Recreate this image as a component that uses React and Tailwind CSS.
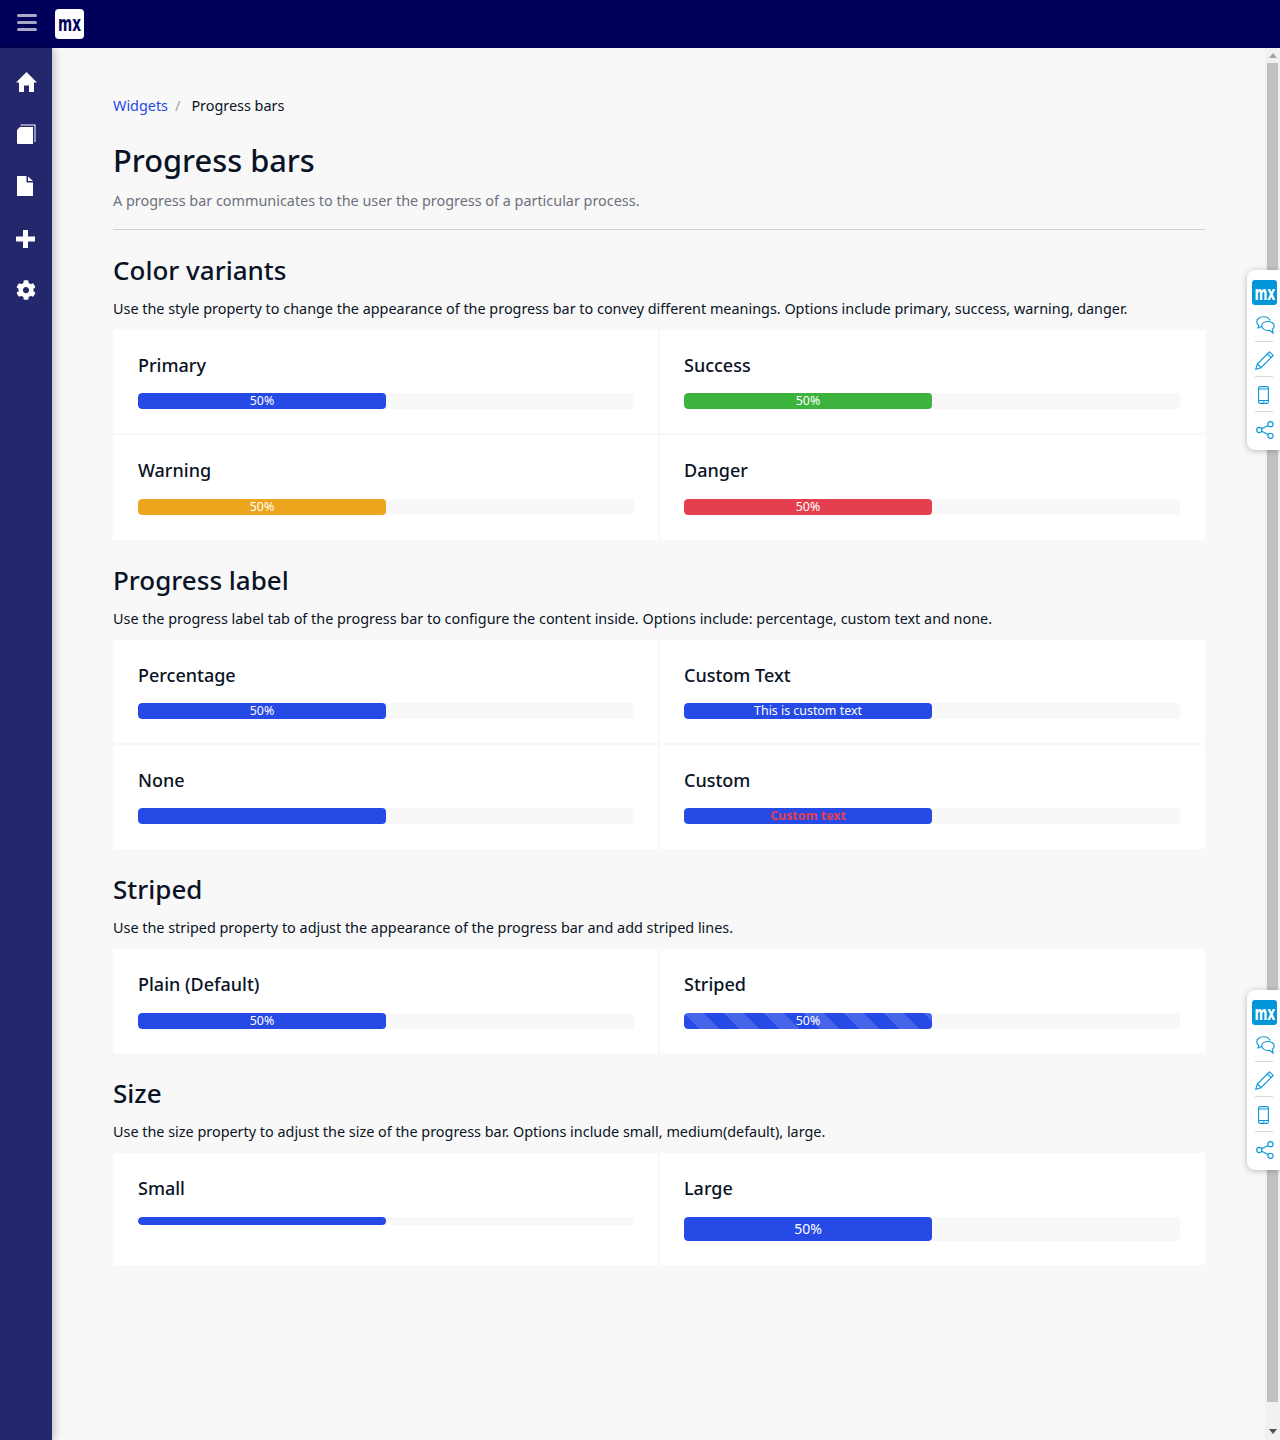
import React from "react";
import { FaCog } from "react-icons/fa";

function Bar({ color = "bg-[#264ae5]", h = "h-4", text = "50%", textCls = "text-white text-[12.4px]", striped }) {
  return (
    <div className={`${h} w-full rounded-[4px] bg-[#f8f8f8] overflow-hidden`}>
      <div
        className={`w-1/2 h-full rounded-[4px] ${color} flex items-center justify-center ${textCls} ${
          striped ? "bg-[linear-gradient(45deg,rgba(255,255,255,0.15)_25%,transparent_25%,transparent_50%,rgba(255,255,255,0.15)_50%,rgba(255,255,255,0.15)_75%,transparent_75%,transparent)] bg-[length:40px_40px]" : ""
        }`}
      >
        {text}
      </div>
    </div>
  );
}

function Cell({ title, left, right, bottom, mb = "mb-[16px]", pb = "pb-[24px]", children }) {
  return (
    <div
      className={`pt-[23px] ${pb} ${left ? "pl-[25px] pr-[24px] border-r border-[#f8f8f8]" : ""} ${
        right ? "pl-[24px] pr-[25px] border-l border-[#f8f8f8]" : ""
      } ${bottom ? "border-b-2 border-b-[#f8f8f8]" : ""}`}
    >
      <div className={`text-[18px] leading-[24px] font-medium text-[#0a1325] ${mb}`}>{title}</div>
      {children}
    </div>
  );
}

function Section({ title, desc, children }) {
  return (
    <section className="mt-[24px]">
      <h2 className="text-[26px] leading-[32px] font-medium text-[#0a1325]">{title}</h2>
      <p className="mt-[13px] text-[14.4px] leading-[20px] text-[#0a1325]">{desc}</p>
      <div className="mt-[11px] grid grid-cols-2 bg-white">{children}</div>
    </section>
  );
}

function Dock({ top }) {
  return (
    <div
      className={`absolute right-0 ${top} w-[33px] h-[180px] bg-white rounded-l-[8px] shadow-[0_1px_6px_rgba(0,0,0,0.25)] flex flex-col items-start`}
    >
      <div className="mt-[10px] ml-[5px] w-[25px] h-[25px] rounded-[3px] bg-[#0595db] text-white flex items-center justify-center overflow-hidden">
        <span className="inline-block text-[20px] leading-[24px] font-bold scale-x-[0.62]" style={{ fontFamily: '"DejaVu Sans", sans-serif' }}>mx</span>
      </div>
      <svg className="mt-[11px] ml-[9px]" width="19" height="18" viewBox="0 0 19 18" fill="none" stroke="#0595db" strokeWidth="1.1">
        <path d="M7.500.8C3.700.8.700 3 .700 5.800c0 1.400.7 2.600 1.900 3.500L2.100 12l2.800-1.400c.6.200 1.300.3 2 .3" />
        <path d="M7.500.8c3.100 0 5.700 1.500 6.400 3.700" />
        <path d="M12 5.500c3.400 0 6.200 1.900 6.200 4.400 0 1.300-.7 2.400-1.800 3.200l.6 4-3.200-2.800c-.6.100-1.200.2-1.800.2-3.400 0-6.200-2-6.200-4.600S8.600 5.500 12 5.500z" fill="white" />
      </svg>
      <div className="mt-[7px] ml-[8px] w-[18px] h-px bg-[#d8d8d8]" />
      <svg className="mt-[9px] ml-[8px]" width="19" height="19" viewBox="0 0 19 19" fill="none" stroke="#0595db" strokeWidth="1.1">
        <path d="M14.500.8l3.700 3.700L6 16.700l-5.200 1.500L2.300 13z" />
        <path d="M12.500 2.800l3.700 3.700M2.300 13L6 16.700" />
      </svg>
      <div className="mt-[6px] ml-[8px] w-[18px] h-px bg-[#d8d8d8]" />
      <svg className="mt-[9px] ml-[11px]" width="11" height="18" viewBox="0 0 11 18" fill="none" stroke="#0595db" strokeWidth="1.1">
        <rect x="0.600" y="0.600" width="9.800" height="16.800" rx="1.500" />
        <path d="M.6 3h9.800M.6 14.500h9.800M4.500 16h2" />
      </svg>
      <div className="mt-[7px] ml-[8px] w-[18px] h-px bg-[#d8d8d8]" />
      <svg className="mt-[9px] ml-[9px]" width="18" height="18" viewBox="0 0 18 18" fill="none" stroke="#0595db" strokeWidth="1.1">
        <circle cx="14.500" cy="3.200" r="2.600" />
        <circle cx="3.300" cy="9" r="2.600" />
        <circle cx="14.500" cy="14.800" r="2.600" />
        <path d="M5.600 7.800L12.200 4.400M5.600 10.200L12.200 13.600" />
      </svg>
    </div>
  );
}

export default function App() {
  return (
    <div className="relative w-[1280px] h-[1440px] overflow-hidden bg-[#f8f8f8] flex flex-col" style={{ fontFamily: '"Noto Sans", sans-serif' }}>
      <header className="h-12 shrink-0 bg-[#00005b] flex items-start">
        <div className="w-[55px] pt-[14px] pl-[17px]">
          <div className="w-5 flex flex-col gap-[4px]">
            <span className="block h-[3px] rounded-sm bg-[#a9a9c6]" />
            <span className="block h-[3px] rounded-sm bg-[#a9a9c6]" />
            <span className="block h-[3px] rounded-sm bg-[#a9a9c6]" />
          </div>
        </div>
        <div className="mt-[9px] w-[29px] h-[30px] bg-white rounded-[4px] text-[#00005b] flex items-center justify-center overflow-hidden">
          <span className="inline-block text-[22px] leading-[26px] font-bold scale-x-[0.62]" style={{ fontFamily: '"DejaVu Sans", sans-serif' }}>mx</span>
        </div>
      </header>
      <div className="flex flex-1 min-h-0">
        <aside className="w-[52px] shrink-0 bg-[#24276c] text-white shadow-[2px_0_8px_rgba(0,0,0,0.25)] z-10 flex flex-col">
          <svg className="mt-[24px] ml-[16px]" width="21" height="20" viewBox="0 0 21 20" fill="white">
            <path d="M10.500 0L21 10.500h-3V20h-5v-6.500H8V20H3v-9.500H0z" />
          </svg>
          <svg className="mt-[32px] ml-[17px]" width="19" height="20" viewBox="0 0 19 20" fill="white">
            <path d="M3 3h13v17H1a1 1 0 0 1-1-1V6z" />
            <path d="M3.500.5h15v17.500h-1V1.500h-14z" />
          </svg>
          <svg className="mt-[32px] ml-[17px]" width="16" height="20" viewBox="0 0 16 20" fill="white">
            <path d="M0 0h9.500v6.500H16V20H0z" />
            <path d="M11 .5L16 5h-5z" />
          </svg>
          <svg className="mt-[34px] ml-[16px]" width="19" height="18" viewBox="0 0 19 18" fill="white">
            <path d="M7 0h5v6.500h7v5h-7V18H7v-6.500H0v-5h7z" />
          </svg>
          <FaCog className="mt-[32px] ml-[16px]" size={20} />
        </aside>
        <main className="flex-1 pl-[61px] pr-[60px] pt-[48px] min-w-0">
          <div className="text-[14.4px] leading-[20px] flex">
            <span className="text-[#264ae5]">Widgets</span>
            <span className="text-[#9ca3af] ml-[7px]">/</span>
            <span className="text-[#0a1325] ml-[11px]">Progress bars</span>
          </div>
          <h1 className="mt-[24px] text-[30.8px] leading-[40px] font-medium text-[#0a1325]">Progress bars</h1>
          <p className="mt-[11px] text-[14.4px] leading-[20px] text-[#6c717e]">A progress bar communicates to the user the progress of a particular process.</p>
          <div className="mt-[18px] h-px bg-[#ced0d3]" />
          <Section
            title="Color variants"
            desc="Use the style property to change the appearance of the progress bar to convey different meanings. Options include primary, success, warning, danger."
          >
            <Cell title="Primary" left bottom><Bar /></Cell>
            <Cell title="Success" right bottom><Bar color="bg-[#3cb33d]" /></Cell>
            <Cell title="Warning" left mb="mb-[17px]" pb="pb-[25px]"><Bar color="bg-[#eca51c]" /></Cell>
            <Cell title="Danger" right mb="mb-[17px]" pb="pb-[25px]"><Bar color="bg-[#e33f4e]" /></Cell>
          </Section>
          <Section
            title="Progress label"
            desc="Use the progress label tab of the progress bar to configure the content inside. Options include: percentage, custom text and none."
          >
            <Cell title="Percentage" left bottom><Bar /></Cell>
            <Cell title="Custom Text" right bottom><Bar text="This is custom text" /></Cell>
            <Cell title="None" left pb="pb-[25px]"><Bar text="" /></Cell>
            <Cell title="Custom" right pb="pb-[25px]"><Bar text="Custom text" textCls="text-[#e33f4e] text-[12.4px] font-bold" /></Cell>
          </Section>
          <Section
            title="Striped"
            desc="Use the striped property to adjust the appearance of the progress bar and add striped lines."
          >
            <Cell title="Plain (Default)" left mb="mb-[17px]"><Bar /></Cell>
            <Cell title="Striped" right mb="mb-[17px]"><Bar striped /></Cell>
          </Section>
          <Section
            title="Size"
            desc="Use the size property to adjust the size of the progress bar. Options include small, medium(default), large."
          >
            <Cell title="Small" left mb="mb-[17px]" pb="pb-[40px]"><Bar h="h-2" text="" /></Cell>
            <Cell title="Large" right mb="mb-[17px]"><Bar h="h-6" textCls="text-white text-[14px] pb-px" /></Cell>
          </Section>
        </main>
        <div className="w-[15px] shrink-0 bg-[#f1f1f1] flex flex-col items-center">
          <svg className="mt-[5px]" width="8" height="6" viewBox="0 0 8 6"><path d="M4 0l4 5H0z" fill="#a3a3a3" /></svg>
          <div className="mt-[4px] w-[11px] flex-1 bg-[#c1c1c1]" />
          <svg className="mt-[27px] mb-[5px]" width="8" height="6" viewBox="0 0 8 6"><path d="M4 5L8 0H0z" fill="#505050" /></svg>
        </div>
      </div>
      <Dock top="top-[270px]" />
      <Dock top="top-[990px]" />
    </div>
  );
}
